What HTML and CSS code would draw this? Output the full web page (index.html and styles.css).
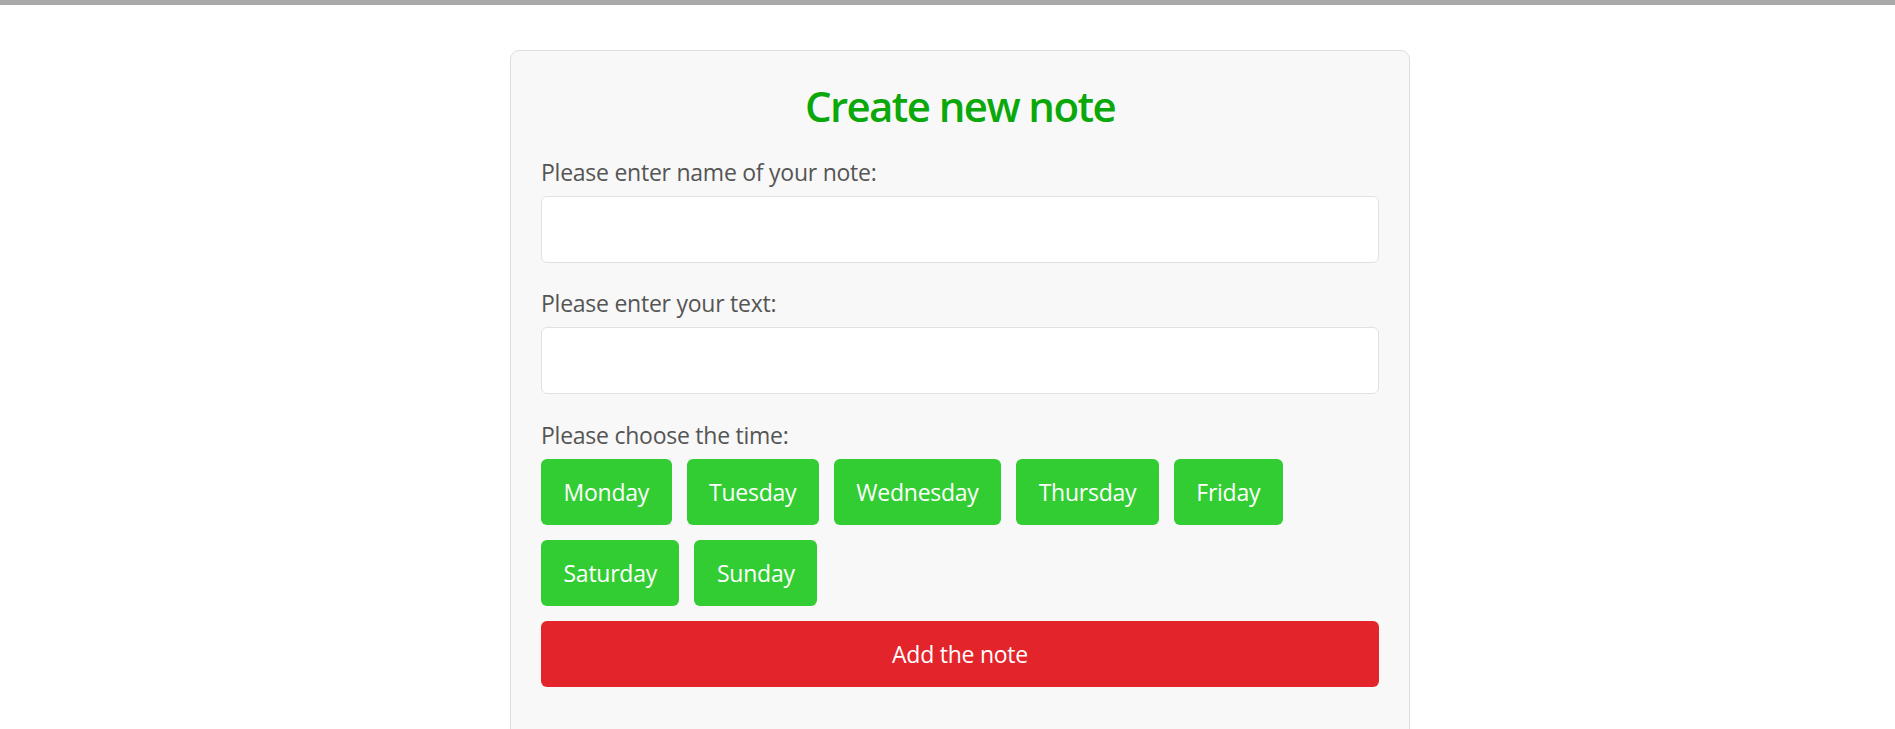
FILE: index.html
```html
<!DOCTYPE html>
<html lang="en">
<head>
<meta charset="utf-8">
<title>Create new note</title>
<link rel="stylesheet" href="styles.css">
</head>
<body>
<div class="topbar"></div>
<main class="page">
  <form class="card">
    <h2 class="title">Create new note</h2>
    <div class="group">
      <label class="label" for="name">Please enter name of your note:</label>
      <input class="input" id="name" type="text">
    </div>
    <div class="group">
      <label class="label" for="text">Please enter your text:</label>
      <input class="input" id="text" type="text">
    </div>
    <div class="group group-last">
      <span class="label">Please choose the time:</span>
      <div class="days">
        <button type="button" class="day">Monday</button>
        <button type="button" class="day">Tuesday</button>
        <button type="button" class="day">Wednesday</button>
        <button type="button" class="day">Thursday</button>
        <button type="button" class="day">Friday</button>
        <button type="button" class="day">Saturday</button>
        <button type="button" class="day">Sunday</button>
      </div>
    </div>
    <button type="button" class="add">Add the note</button>
  </form>
</main>
</body>
</html>
```
FILE: styles.css
```css
* { box-sizing: border-box; }
html, body { margin: 0; padding: 0; background: #ffffff; }
body {
  font-family: "Open Sans", "Noto Sans", Arial, sans-serif;
  color: #555555;
  overflow: hidden;
}
.topbar {
  height: 5px;
  background: #a9a9a9;
}
.page {
  padding: 45px 0 0 25px;
}
.card {
  width: 900px;
  margin: 0 auto;
  background: #f8f8f8;
  border: 1px solid #dedede;
  border-radius: 9px;
  padding: 30px 30px 60px;
}
.title {
  margin: 0 0 22.5px;
  text-align: center;
  color: #0aa80a;
  font-size: 42px;
  line-height: 50px;
  font-weight: 600;
  letter-spacing: -1.6px;
}
.group { margin-bottom: 22.5px; }
.group-last { margin-bottom: 15px; }
.label {
  display: block;
  font-size: 23px;
  line-height: 36px;
  letter-spacing: -0.25px;
  margin-bottom: 6px;
  color: #555555;
}
.input {
  display: block;
  width: 100%;
  height: 67px;
  background: #ffffff;
  border: 1px solid #dfe1e4;
  border-radius: 6px;
  margin: 0;
  padding: 0 18px;
  font: inherit;
}
.days {
  display: flex;
  flex-wrap: wrap;
  gap: 15px;
}
.day, .add {
  font-family: inherit;
  font-size: 23px;
  line-height: 36px;
  letter-spacing: -0.25px;
  color: #ffffff;
  border: 0;
  border-radius: 6px;
  padding: 15px 22.5px;
  margin: 0;
  cursor: pointer;
}
.day { background: #32cd32; }
.add {
  display: block;
  width: 100%;
  background: #e3242b;
  text-align: center;
}
```
